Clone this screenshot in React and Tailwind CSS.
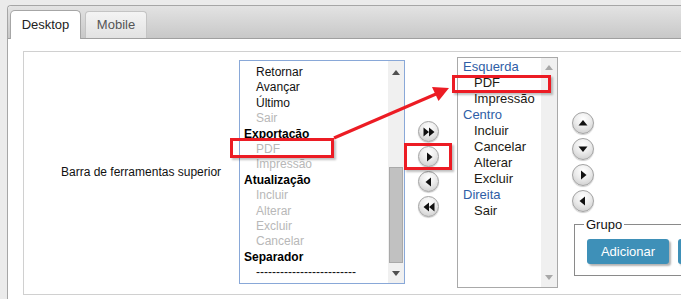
import React from 'react';

const arrows = {
  right: 'M4 1.5 L9.5 6 L4 10.5 Z',
  left: 'M8 1.5 L2.5 6 L8 10.5 Z',
  up: 'M1.5 8.5 L6 3 L10.5 8.5 Z',
  down: 'M1.5 3.5 L6 9 L10.5 3.5 Z',
  rightAll: 'M0.5 1.5 L6 6 L0.5 10.5 Z M6 1.5 L11.5 6 L6 10.5 Z',
  leftAll: 'M11.5 1.5 L6 6 L11.5 10.5 Z M6 1.5 L0.5 6 L6 10.5 Z',
};

const RoundButton = ({ dir, big }) => (
  <div
    className={`${big ? 'w-[22px] h-[22px]' : 'w-[21px] h-[21px]'} shrink-0 rounded-full border border-[#a3a3a3] bg-[radial-gradient(circle_at_50%_30%,#ffffff_0%,#ececec_45%,#c6c6c6_100%)] shadow-[0_1px_1px_rgba(0,0,0,0.2)] flex items-center justify-center`}
  >
    <svg width="12" height="12" viewBox="0 0 12 12">
      <path d={arrows[dir]} fill="#111" />
    </svg>
  </div>
);

const Tri = ({ up, color }) => (
  <svg width="8" height="5" viewBox="0 0 8 5">
    <path d={up ? 'M0 5 L4 0 L8 5 Z' : 'M0 0 L4 5 L8 0 Z'} fill={color} />
  </svg>
);

const leftItems = [
  { t: 'Retornar' },
  { t: 'Avançar' },
  { t: 'Último' },
  { t: 'Sair', off: true },
  { t: 'Exportação', group: true },
  { t: 'PDF', off: true },
  { t: 'Impressão', off: true },
  { t: 'Atualização', group: true },
  { t: 'Incluir', off: true },
  { t: 'Alterar', off: true },
  { t: 'Excluir', off: true },
  { t: 'Cancelar', off: true },
  { t: 'Separador', group: true },
  { t: '-------------------------' },
];

const rightItems = [
  { t: 'Esquerda', group: true },
  { t: 'PDF' },
  { t: 'Impressão' },
  { t: 'Centro', group: true },
  { t: 'Incluir' },
  { t: 'Cancelar' },
  { t: 'Alterar' },
  { t: 'Excluir' },
  { t: 'Direita', group: true },
  { t: 'Sair' },
];

const LeftList = () => (
  <div className="w-[166px] h-[224px] shrink-0 mt-[3px] border border-[#89a8d8] bg-white flex overflow-hidden">
    <div className="flex-1 min-w-0 pt-[4px] text-[12px] leading-[15.4px] whitespace-nowrap overflow-hidden">
      {leftItems.map((it, i) => (
        <div
          key={i}
          className={
            it.group
              ? 'pl-[4px] font-bold text-black'
              : `pl-[16px] ${it.off ? 'text-[#b8b8b8]' : 'text-[#111]'}`
          }
        >
          {it.t}
        </div>
      ))}
    </div>
    <div className="w-[16px] shrink-0 bg-[#f0f0f0] flex flex-col">
      <div className="h-[20px] flex items-center justify-center pt-[2px]">
        <Tri up color="#505050" />
      </div>
      <div className="h-[86px]" />
      <div className="h-[96px] mx-[1px] bg-[#c1c1c1] border border-[#a9a9a9]" />
      <div className="flex-1 flex items-center justify-center">
        <Tri color="#505050" />
      </div>
    </div>
  </div>
);

const RightList = () => (
  <div className="w-[101px] h-[231px] shrink-0 border border-[#a9a9a9] bg-white flex overflow-hidden">
    <div className="flex-1 min-w-0 pt-[1px] text-[13px] leading-[16px] whitespace-nowrap overflow-hidden">
      {rightItems.map((it, i) => (
        <div
          key={i}
          className={it.group ? 'pl-[5px] text-[#2f5ea6]' : 'pl-[16px] text-[#1c1a14]'}
        >
          {it.t}
        </div>
      ))}
    </div>
    <div className="w-[16px] shrink-0 bg-[#f0f0f0] flex flex-col justify-between py-[7px] items-center">
      <Tri up color="#a8a8a8" />
      <Tri color="#a8a8a8" />
    </div>
  </div>
);

const BlueButton = ({ children }) => (
  <div className="w-[82px] h-[25px] shrink-0 rounded-[3px] bg-[#3e90b8] text-white text-[13px] flex items-center justify-center shadow-[2px_2px_2px_rgba(0,0,0,0.3)]">
    {children}
  </div>
);

export default function App() {
  return (
    <div className="relative w-[681px] h-[299px] overflow-hidden bg-[#ebebeb] pt-[5px] pl-[7px] font-['Liberation_Sans',Arial,sans-serif]">
      <div className="w-[700px] h-full bg-white border-l border-t border-[#a6a6a6] rounded-tl-[4px]">
        <div className="h-[33px] bg-gradient-to-b from-[#e3e3e3] to-[#c8c8c8] border-b border-[#a0a0a0] flex items-end gap-[4px] pl-[2px] rounded-tl-[4px]">
          <div className="w-[71px] h-[29px] shrink-0 -mb-px bg-white border border-b-0 border-[#a6a6a6] rounded-t-[5px] flex items-center justify-center text-[13px] text-[#222]">
            Desktop
          </div>
          <div className="w-[62px] h-[27px] shrink-0 bg-gradient-to-b from-[#f4f4f4] to-[#e2e2e2] border border-b-0 border-[#c4c4c4] rounded-t-[4px] flex items-center justify-center text-[13px] text-[#555]">
            Mobile
          </div>
        </div>

        <div className="pt-[12px] pl-[15px]">
          <div className="h-[244px] border-l border-t border-b border-[#d0d0d0] flex items-start pt-[5px]">
            <div className="w-[215px] h-[224px] shrink-0 mt-[3px] flex items-center pl-[37px] text-[12px] text-[#111] whitespace-nowrap">
              Barra de ferramentas superior
            </div>
            <LeftList />
            <div className="w-[52px] shrink-0 pl-[13px] mt-[64px] flex flex-col gap-[4px]">
              <RoundButton dir="rightAll" />
              <RoundButton dir="right" />
              <RoundButton dir="left" />
              <RoundButton dir="leftAll" />
            </div>
            <RightList />
            <div className="shrink-0 pl-[14px] mt-[55px] flex flex-col">
              <div className="flex flex-col gap-[4px]">
                <RoundButton dir="up" big />
                <RoundButton dir="down" big />
                <RoundButton dir="right" big />
                <RoundButton dir="left" big />
              </div>
              <fieldset className="ml-[2px] mt-[5px] w-[200px] border border-[#8a8a8a] pl-[9px] pb-[11px]">
                <legend className="px-[2px] text-[13px] leading-[15px] text-[#111]">Grupo</legend>
                <div className="flex gap-[9px] mt-[7px] ml-[3px]">
                  <BlueButton>Adicionar</BlueButton>
                  <BlueButton />
                </div>
              </fieldset>
            </div>
          </div>
        </div>
      </div>

      <div className="absolute left-[230px] top-[138px] w-[104px] h-[20px] border-[3px] border-[#ec1c24] shadow-[2px_2px_2px_rgba(0,0,0,0.25)]" />
      <div className="absolute left-[404px] top-[143px] w-[48px] h-[27px] border-[3px] border-[#ec1c24] shadow-[2px_2px_2px_rgba(0,0,0,0.25)]" />
      <div className="absolute left-[452px] top-[75px] w-[99px] h-[18px] border-[3px] border-[#ec1c24] shadow-[2px_2px_2px_rgba(0,0,0,0.25)]" />
      <svg className="absolute left-0 top-0" width="681" height="299" viewBox="0 0 681 299">
        <line x1="334" y1="138" x2="436" y2="94" stroke="#ec1c24" strokeWidth="3" />
        <polygon points="449,88 438.5,101 432,87" fill="#ec1c24" />
      </svg>
    </div>
  );
}
